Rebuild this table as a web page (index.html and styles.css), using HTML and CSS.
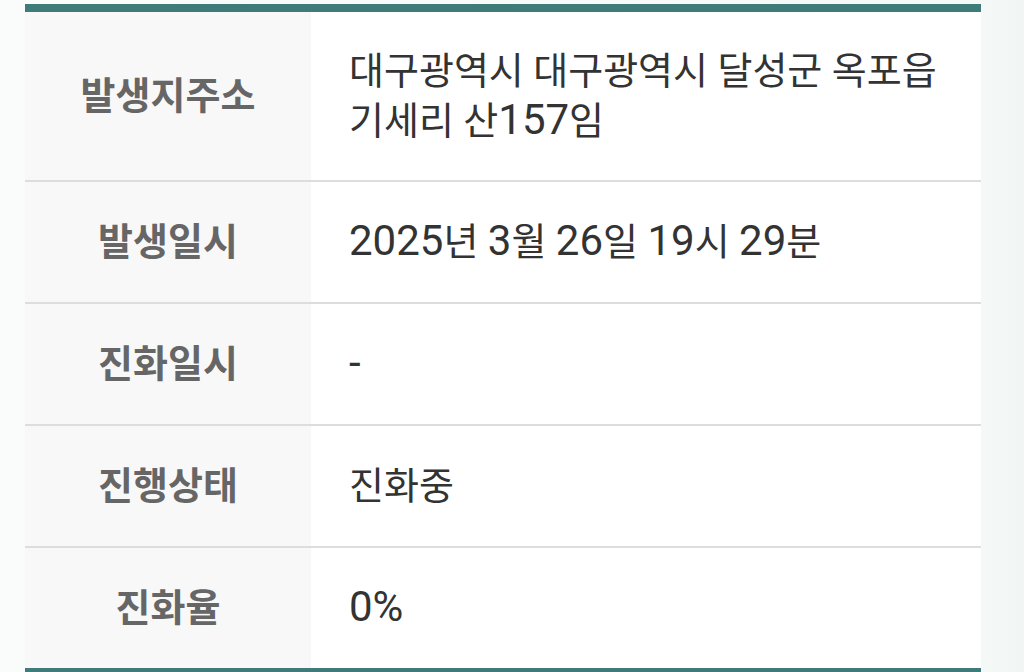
FILE: index.html
```html
<!DOCTYPE html>
<html lang="ko">
<head>
<meta charset="utf-8">
<link rel="stylesheet" href="styles.css">
</head>
<body>
<div class="page">
  <div class="info-table">
    <div class="row row-first">
      <div class="label">발생지주소</div>
      <div class="value">대구광역시 대구광역시 달성군 옥포읍 기세리 산<span class="num">157</span>임</div>
    </div>
    <div class="row">
      <div class="label">발생일시</div>
      <div class="value"><span class="num">2025</span>년 <span class="num">3</span>월 <span class="num">26</span>일 <span class="num">19</span>시 <span class="num">29</span>분</div>
    </div>
    <div class="row">
      <div class="label">진화일시</div>
      <div class="value"><span class="num">-</span></div>
    </div>
    <div class="row">
      <div class="label">진행상태</div>
      <div class="value">진화중</div>
    </div>
    <div class="row">
      <div class="label">진화율</div>
      <div class="value"><span class="num">0%</span></div>
    </div>
  </div>
</div>
</body>
</html>
```

FILE: styles.css
```css
html, body {
  margin: 0;
  padding: 0;
}
body {
  width: 1024px;
  height: 672px;
  overflow: hidden;
  background: linear-gradient(90deg, #fafcfc 0px, #fafcfc 25px, #f4f8f7 981px, #f1f6f5 1024px);
  font-family: Roboto, "Noto Sans CJK KR", sans-serif;
}
.page {
  padding: 4px 43px 0 25px;
}
.info-table {
  border-top: 8px solid #3f7b78;
  border-bottom: 8px solid #3f7b78;
  background: #ffffff;
}
.row {
  display: flex;
  border-bottom: 2px solid #dddddd;
}
.row:last-child {
  border-bottom: none;
}
.label {
  flex: 0 0 286px;
  background: #f8f8f8;
  color: #666666;
  font-weight: 700;
  font-size: 38px;
  line-height: 50px;
  height: 50px;
  padding: 35px 0;
  display: flex;
  align-items: center;
  justify-content: center;
  align-self: stretch;
  box-sizing: content-box;
}
.value {
  flex: 1;
  color: #333333;
  font-size: 38px;
  line-height: 50px;
  padding: 35px 36px 35px 38px;
}
.row-first .label {
  height: auto;
  padding: 34px 0;
}
.row-first .value {
  padding-top: 34px;
  padding-bottom: 34px;
}
.num {
  font-size: 42px;
  line-height: 1;
}
```
